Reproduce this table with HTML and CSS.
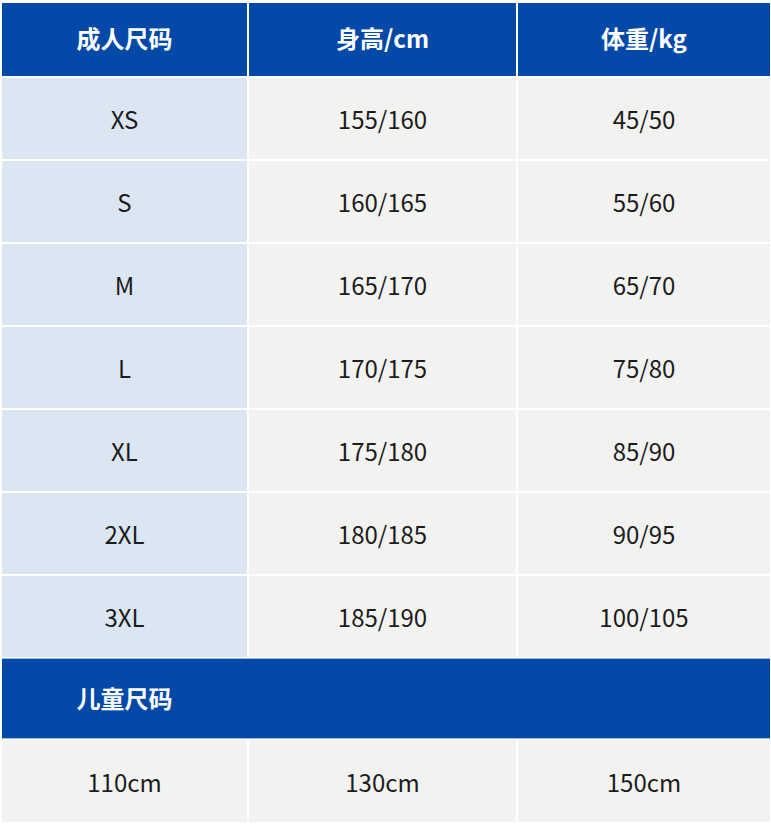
FILE: index.html
```html
<!DOCTYPE html>
<html lang="zh">
<head>
<meta charset="utf-8">
<title>尺码表</title>
<link rel="stylesheet" href="styles.css">
</head>
<body>
<div class="table">
  <div class="cell head">成人尺码</div>
  <div class="cell head">身高/cm</div>
  <div class="cell head">体重/kg</div>

  <div class="cell size">XS</div><div class="cell">155/160</div><div class="cell">45/50</div>
  <div class="cell size">S</div><div class="cell">160/165</div><div class="cell">55/60</div>
  <div class="cell size">M</div><div class="cell">165/170</div><div class="cell">65/70</div>
  <div class="cell size">L</div><div class="cell">170/175</div><div class="cell">75/80</div>
  <div class="cell size">XL</div><div class="cell">175/180</div><div class="cell">85/90</div>
  <div class="cell size">2XL</div><div class="cell">180/185</div><div class="cell">90/95</div>
  <div class="cell size">3XL</div><div class="cell">185/190</div><div class="cell">100/105</div>

  <div class="band"><span class="band-title">儿童尺码</span></div>

  <div class="cell kid">110cm</div><div class="cell kid">130cm</div><div class="cell kid">150cm</div>
</div>
</body>
</html>
```
FILE: styles.css
```css
html, body {
  margin: 0;
  padding: 0;
  background: #ffffff;
}
body {
  font-family: "Noto Sans CJK SC", "Noto Sans", sans-serif;
  color: #1c1c1c;
}
.table {
  display: grid;
  grid-template-columns: 245px 267px 252px;
  grid-template-rows: 73px repeat(7, 81px) 79px 82px;
  gap: 2px;
  padding: 3px 0 0 2px;
}
.cell {
  display: flex;
  align-items: center;
  justify-content: center;
  background: #f2f2f0;
  font-size: 24px;
  line-height: 1;
  padding-top: 1px;
}
.cell.size {
  background: #dce6f3;
}
.cell.head {
  background: #0549a8;
  color: #ffffff;
  font-weight: 700;
  font-size: 24px;
  padding: 0 0 4px;
}
.band {
  grid-column: 1 / -1;
  background: #0549a8;
  display: flex;
  align-items: center;
  padding-bottom: 2px;
  box-shadow: 0 -1px 0 #8fbbe8, 0 1px 0 #8fbbe8;
}
.band-title {
  width: 245px;
  text-align: center;
  color: #ffffff;
  font-weight: 700;
  font-size: 24px;
}
```
